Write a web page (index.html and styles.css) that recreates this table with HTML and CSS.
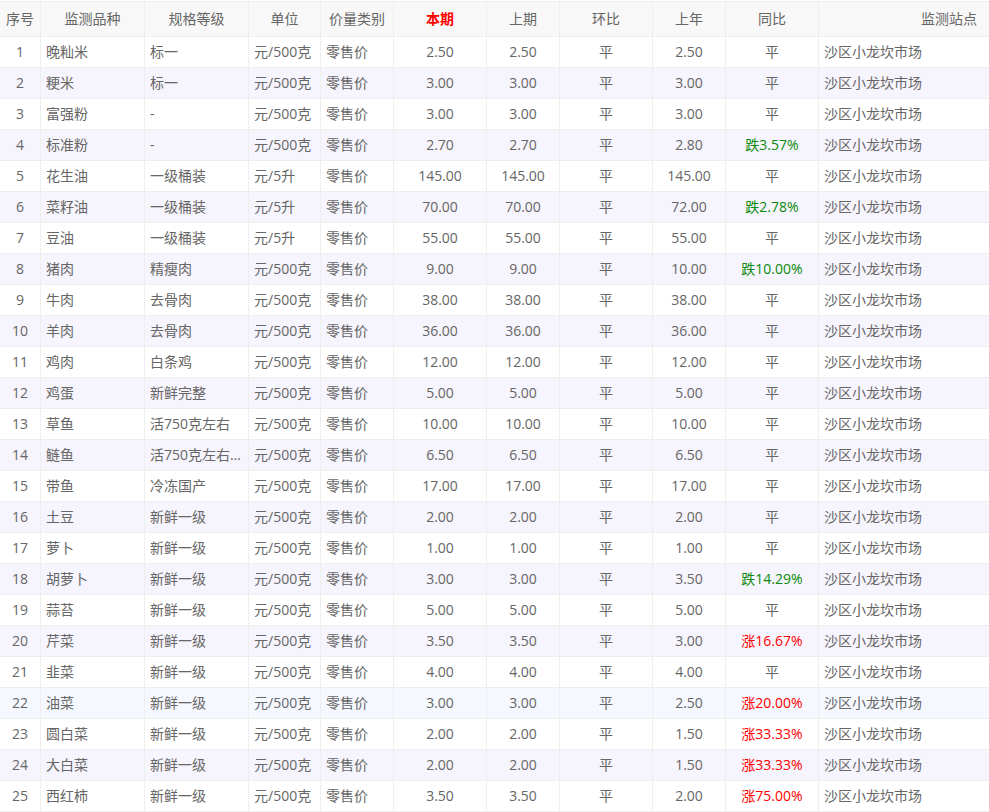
FILE: index.html
```html
<!DOCTYPE html>
<html lang="zh-CN">
<head>
<meta charset="utf-8">
<title>价格监测</title>
<link rel="stylesheet" href="styles.css">
</head>
<body>
<table class="price-table">
  <colgroup>
    <col class="c-no"><col class="c-name"><col class="c-spec"><col class="c-unit"><col class="c-type">
    <col class="c-now"><col class="c-prev"><col class="c-mom"><col class="c-last"><col class="c-yoy"><col class="c-site">
  </colgroup>
  <thead>
    <tr>
      <th>序号</th><th>监测品种</th><th>规格等级</th><th>单位</th><th class="left">价量类别</th>
      <th class="hot">本期</th><th>上期</th><th>环比</th><th>上年</th><th>同比</th><th class="right">监测站点</th>
    </tr>
  </thead>
  <tbody>
    <tr><td class="c">1</td><td>晚籼米</td><td>标一</td><td>元/500克</td><td>零售价</td><td class="c">2.50</td><td class="c">2.50</td><td class="c">平</td><td class="c">2.50</td><td class="c">平</td><td>沙区小龙坎市场</td></tr>
    <tr><td class="c">2</td><td>粳米</td><td>标一</td><td>元/500克</td><td>零售价</td><td class="c">3.00</td><td class="c">3.00</td><td class="c">平</td><td class="c">3.00</td><td class="c">平</td><td>沙区小龙坎市场</td></tr>
    <tr><td class="c">3</td><td>富强粉</td><td>-</td><td>元/500克</td><td>零售价</td><td class="c">3.00</td><td class="c">3.00</td><td class="c">平</td><td class="c">3.00</td><td class="c">平</td><td>沙区小龙坎市场</td></tr>
    <tr><td class="c">4</td><td>标准粉</td><td>-</td><td>元/500克</td><td>零售价</td><td class="c">2.70</td><td class="c">2.70</td><td class="c">平</td><td class="c">2.80</td><td class="c down">跌3.57%</td><td>沙区小龙坎市场</td></tr>
    <tr><td class="c">5</td><td>花生油</td><td>一级桶装</td><td>元/5升</td><td>零售价</td><td class="c">145.00</td><td class="c">145.00</td><td class="c">平</td><td class="c">145.00</td><td class="c">平</td><td>沙区小龙坎市场</td></tr>
    <tr><td class="c">6</td><td>菜籽油</td><td>一级桶装</td><td>元/5升</td><td>零售价</td><td class="c">70.00</td><td class="c">70.00</td><td class="c">平</td><td class="c">72.00</td><td class="c down">跌2.78%</td><td>沙区小龙坎市场</td></tr>
    <tr><td class="c">7</td><td>豆油</td><td>一级桶装</td><td>元/5升</td><td>零售价</td><td class="c">55.00</td><td class="c">55.00</td><td class="c">平</td><td class="c">55.00</td><td class="c">平</td><td>沙区小龙坎市场</td></tr>
    <tr><td class="c">8</td><td>猪肉</td><td>精瘦肉</td><td>元/500克</td><td>零售价</td><td class="c">9.00</td><td class="c">9.00</td><td class="c">平</td><td class="c">10.00</td><td class="c down">跌10.00%</td><td>沙区小龙坎市场</td></tr>
    <tr><td class="c">9</td><td>牛肉</td><td>去骨肉</td><td>元/500克</td><td>零售价</td><td class="c">38.00</td><td class="c">38.00</td><td class="c">平</td><td class="c">38.00</td><td class="c">平</td><td>沙区小龙坎市场</td></tr>
    <tr><td class="c">10</td><td>羊肉</td><td>去骨肉</td><td>元/500克</td><td>零售价</td><td class="c">36.00</td><td class="c">36.00</td><td class="c">平</td><td class="c">36.00</td><td class="c">平</td><td>沙区小龙坎市场</td></tr>
    <tr><td class="c">11</td><td>鸡肉</td><td>白条鸡</td><td>元/500克</td><td>零售价</td><td class="c">12.00</td><td class="c">12.00</td><td class="c">平</td><td class="c">12.00</td><td class="c">平</td><td>沙区小龙坎市场</td></tr>
    <tr><td class="c">12</td><td>鸡蛋</td><td>新鲜完整</td><td>元/500克</td><td>零售价</td><td class="c">5.00</td><td class="c">5.00</td><td class="c">平</td><td class="c">5.00</td><td class="c">平</td><td>沙区小龙坎市场</td></tr>
    <tr><td class="c">13</td><td>草鱼</td><td>活750克左右</td><td>元/500克</td><td>零售价</td><td class="c">10.00</td><td class="c">10.00</td><td class="c">平</td><td class="c">10.00</td><td class="c">平</td><td>沙区小龙坎市场</td></tr>
    <tr><td class="c">14</td><td>鲢鱼</td><td>活750克左右（鲜活）</td><td>元/500克</td><td>零售价</td><td class="c">6.50</td><td class="c">6.50</td><td class="c">平</td><td class="c">6.50</td><td class="c">平</td><td>沙区小龙坎市场</td></tr>
    <tr><td class="c">15</td><td>带鱼</td><td>冷冻国产</td><td>元/500克</td><td>零售价</td><td class="c">17.00</td><td class="c">17.00</td><td class="c">平</td><td class="c">17.00</td><td class="c">平</td><td>沙区小龙坎市场</td></tr>
    <tr><td class="c">16</td><td>土豆</td><td>新鲜一级</td><td>元/500克</td><td>零售价</td><td class="c">2.00</td><td class="c">2.00</td><td class="c">平</td><td class="c">2.00</td><td class="c">平</td><td>沙区小龙坎市场</td></tr>
    <tr><td class="c">17</td><td>萝卜</td><td>新鲜一级</td><td>元/500克</td><td>零售价</td><td class="c">1.00</td><td class="c">1.00</td><td class="c">平</td><td class="c">1.00</td><td class="c">平</td><td>沙区小龙坎市场</td></tr>
    <tr><td class="c">18</td><td>胡萝卜</td><td>新鲜一级</td><td>元/500克</td><td>零售价</td><td class="c">3.00</td><td class="c">3.00</td><td class="c">平</td><td class="c">3.50</td><td class="c down">跌14.29%</td><td>沙区小龙坎市场</td></tr>
    <tr><td class="c">19</td><td>蒜苔</td><td>新鲜一级</td><td>元/500克</td><td>零售价</td><td class="c">5.00</td><td class="c">5.00</td><td class="c">平</td><td class="c">5.00</td><td class="c">平</td><td>沙区小龙坎市场</td></tr>
    <tr><td class="c">20</td><td>芹菜</td><td>新鲜一级</td><td>元/500克</td><td>零售价</td><td class="c">3.50</td><td class="c">3.50</td><td class="c">平</td><td class="c">3.00</td><td class="c up">涨16.67%</td><td>沙区小龙坎市场</td></tr>
    <tr><td class="c">21</td><td>韭菜</td><td>新鲜一级</td><td>元/500克</td><td>零售价</td><td class="c">4.00</td><td class="c">4.00</td><td class="c">平</td><td class="c">4.00</td><td class="c">平</td><td>沙区小龙坎市场</td></tr>
    <tr class="hover"><td class="c">22</td><td>油菜</td><td>新鲜一级</td><td>元/500克</td><td>零售价</td><td class="c">3.00</td><td class="c">3.00</td><td class="c">平</td><td class="c">2.50</td><td class="c up">涨20.00%</td><td>沙区小龙坎市场</td></tr>
    <tr><td class="c">23</td><td>圆白菜</td><td>新鲜一级</td><td>元/500克</td><td>零售价</td><td class="c">2.00</td><td class="c">2.00</td><td class="c">平</td><td class="c">1.50</td><td class="c up">涨33.33%</td><td>沙区小龙坎市场</td></tr>
    <tr><td class="c">24</td><td>大白菜</td><td>新鲜一级</td><td>元/500克</td><td>零售价</td><td class="c">2.00</td><td class="c">2.00</td><td class="c">平</td><td class="c">1.50</td><td class="c up">涨33.33%</td><td>沙区小龙坎市场</td></tr>
    <tr><td class="c">25</td><td>西红柿</td><td>新鲜一级</td><td>元/500克</td><td>零售价</td><td class="c">3.50</td><td class="c">3.50</td><td class="c">平</td><td class="c">2.00</td><td class="c up">涨75.00%</td><td>沙区小龙坎市场</td></tr>
  </tbody>
</table>
</body>
</html>
```

FILE: styles.css
```css
html, body {
  margin: 0;
  padding: 0;
  background: #fff;
}

body {
  padding-top: 1px;
  font-family: "Open Sans", "Noto Sans CJK SC", sans-serif;
  font-size: 14px;
  color: #666;
}

.price-table {
  width: 989px;
  table-layout: fixed;
  border-collapse: separate;
  border-spacing: 0;
  border-top: 1px solid #eee;
}

.c-no { width: 41px; }
.c-name { width: 104px; }
.c-spec { width: 104px; }
.c-unit { width: 72px; }
.c-type { width: 73px; }
.c-now { width: 93px; }
.c-prev { width: 73px; }
.c-mom { width: 93px; }
.c-last { width: 73px; }
.c-yoy { width: 93px; }
.c-site { width: 170px; }

.price-table th,
.price-table td {
  box-sizing: border-box;
  padding: 0 5px;
  border-right: 1px solid #eee;
  border-bottom: 1px solid #eee;
  white-space: nowrap;
  overflow: hidden;
  text-overflow: ellipsis;
}

.price-table th:last-child,
.price-table td:last-child {
  border-right: none;
}

.price-table th {
  height: 35px;
  line-height: 34px;
  font-weight: normal;
  text-align: center;
  background: #f8f8f8;
  color: #666;
}

.price-table th.left { text-align: center; }
.price-table th.right { text-align: right; padding-right: 12px; }
.price-table th.hot { color: #f00; font-weight: bold; }

.price-table td {
  height: 31px;
  line-height: 30px;
  text-align: left;
}

.price-table td.c { text-align: center; }
.price-table td.down { color: #0a8a0a; }
.price-table td.up { color: #f00; }

.price-table tbody tr:nth-child(even) td { background: #f6f4fc; }
.price-table tbody tr.hover td { background: #f5f8fe; }
```
